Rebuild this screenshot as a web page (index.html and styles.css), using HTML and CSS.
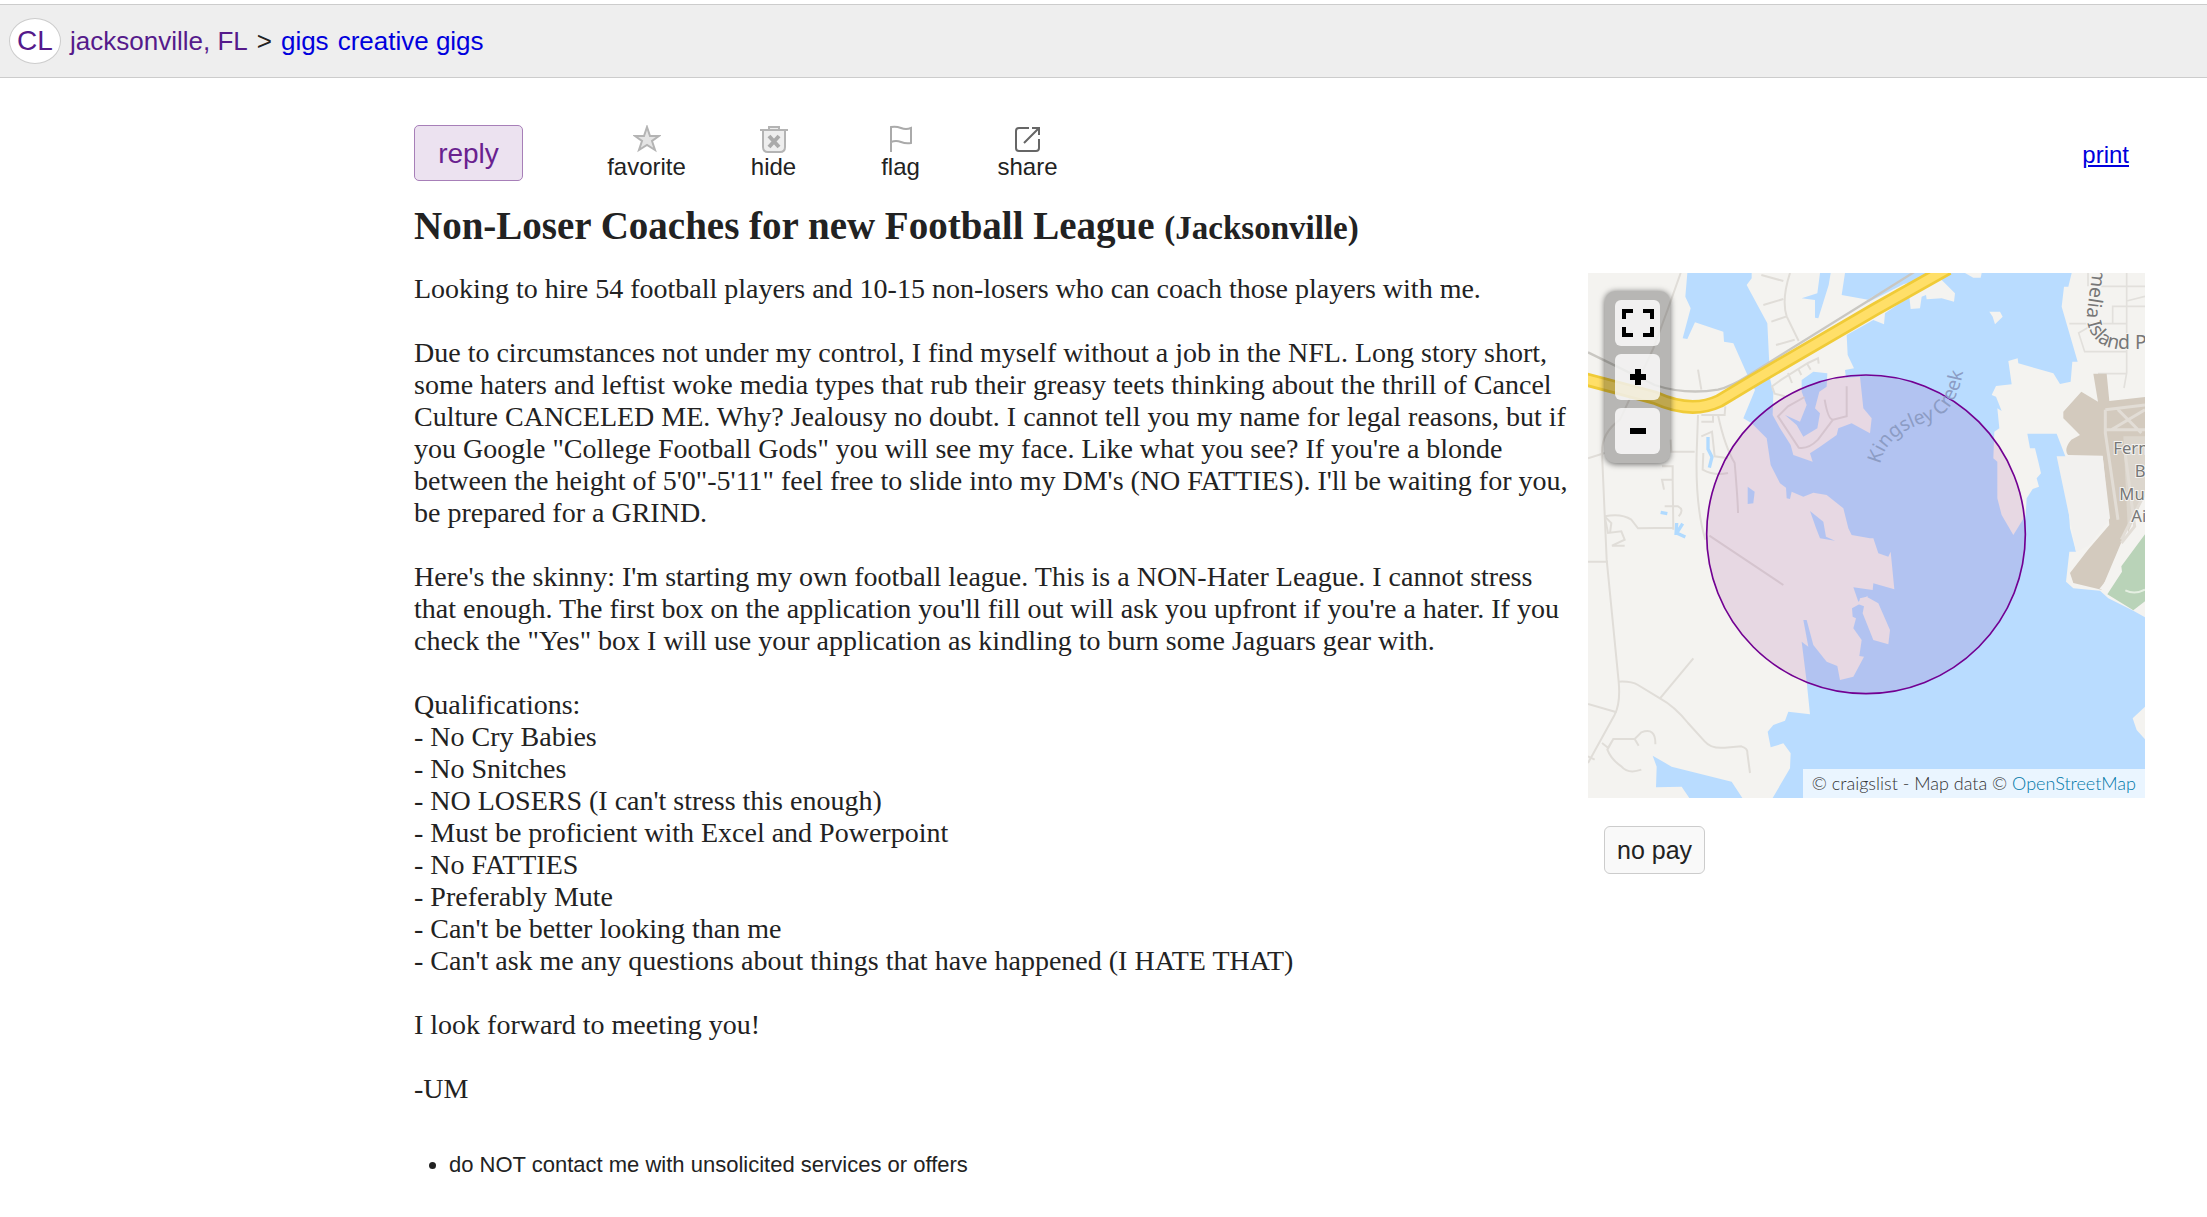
FILE: index.html
```html
<!DOCTYPE html>
<html lang="en">

<head>
    <meta charset="utf-8">
    <title>Non-Loser Coaches for new Football League</title>
    <link rel="stylesheet" href="styles.css">
</head>

<body>
    <header class="header">
        <a class="logo" href="#">CL</a>
        <nav class="crumbs">
            <a class="visited" href="#">jacksonville, FL</a>
            <span>&gt;</span>
            <a href="#">gigs</a>
            <a href="#">creative gigs</a>
        </nav>
    </header>

    <main class="content">
        <div class="toolbar">
            <button class="reply" type="button">reply</button>
            <div class="actions">
                <button class="action" type="button">
                    <svg width="28" height="28" viewBox="0 0 28 28">
                        <path d="M14 2l3 9h9l-7 5 3 9-8-5-8 5 3-9-7-5h9z" fill="#e4e4e4" stroke="#b4b4b4" stroke-width="2"/>
                    </svg>
                    favorite
                </button>
                <button class="action" type="button">
                    <svg width="28" height="28" viewBox="0 0 28 28" fill="none" stroke="#b4b4b4" stroke-width="2">
                        <path d="M0 5h28M9 5V2h10v3M3 5v17q0 5 5 5h12q5 0 5-5V5" fill="#eee"/>
                        <path d="M9 11l10 11M19 11L9 22" stroke="#aaa" stroke-width="4"/>
                    </svg>
                    hide
                </button>
                <button class="action" type="button">
                    <svg width="28" height="28" viewBox="0 0 28 28" fill="none" stroke="#aaa" stroke-width="2">
                        <path d="M4 27V2q5-1 10 1t10 0v15q-5 1-10-1t-10 0"/>
                    </svg>
                    flag
                </button>
                <button class="action" type="button">
                    <svg width="28" height="28" viewBox="0 0 28 28" fill="none" stroke="#666" stroke-width="2">
                        <path d="M15 3H5q-3 0-3 3v17q0 3 3 3h17q3 0 3-3v-9M18 3h7v7M25 3L10 18"/>
                    </svg>
                    share
                </button>
            </div>
            <a class="print" href="#">print</a>
        </div>

        <h1>Non-Loser Coaches for new Football League <small>(Jacksonville)</small></h1>

        <div class="posting">
            <section class="body">
                <p>Looking to hire 54 football players and 10-15 non-losers who can coach those players with me.</p>
                <p>Due to circumstances not under my control, I find myself without a job in the NFL. Long story short, some haters and leftist woke media types that rub their greasy teets thinking about the thrill of Cancel Culture CANCELED ME. Why? Jealousy no doubt. I cannot tell you my name for legal reasons, but if you Google "College Football Gods" you will see my face. Like what you see? If you're a blonde between the height of 5'0"-5'11" feel free to slide into my DM's (NO FATTIES). I'll be waiting for you, be prepared for a GRIND.</p>
                <p>Here's the skinny: I'm starting my own football league. This is a NON-Hater League. I cannot stress that enough. The first box on the application you'll fill out will ask you upfront if you're a hater. If you check the "Yes" box I will use your application as kindling to burn some Jaguars gear with.</p>
                <p>
                    Qualifications:<br>
                    - No Cry Babies<br>
                    - No Snitches<br>
                    - NO LOSERS (I can't stress this enough)<br>
                    - Must be proficient with Excel and Powerpoint<br>
                    - No FATTIES<br>
                    - Preferably Mute<br>
                    - Can't be better looking than me<br>
                    - Can't ask me any questions about things that have happened (I HATE THAT)
                </p>
                <p>I look forward to meeting you!</p>
                <p>-UM</p>
                <ul class="notices">
                    <li>do NOT contact me with unsolicited services or offers</li>
                </ul>
            </section>

            <aside class="side">
                <div class="map">
                    <svg class="tiles" viewBox="0 0 1671 1575">
                        <rect width="1671" height="1575" fill="#f4f3f0"/>

                        <!-- water -->
                        <g fill="#b9dcff">
                            <path d="M298 0L292 71 308 106 284 196 298 198 321 148 406 176 408 206 436 211 476 301 501 351 466 436 491 451 536 496 548 576 576 631 594 644 596 676 606 678 611 656 646 671 676 659 716 666 766 706 781 766 791 786 846 796 856 796 871 841 901 851 908 836 919 949 856 931 854 951 796 943 811 986 840 968 830 985 792 1006 794 1031 804 1036 796 1066 821 1101 814 1149 828 1151 796 1211 756 1221 748 1179 716 1166 676 1116 656 1041 646 1041 661 1121 641 1106 656 1226 666 1324 601 1316 591 1343 556 1356 539 1376 548 1423 586 1411 608 1441 606 1486 554 1575H1671V1033L1636 1013 1561 976 1536 953 1456 946 1434 926 1444 836 1464 836 1446 766 1434 596 1449 594 1406 482H1318L1326 526 1341 526 1351 566 1359 601 1346 616 1353 641 1334 648 1316 676 1313 726 1276 786 1241 726 1228 676V566L1216 556 1219 476 1234 466 1228 406 1241 414 1224 371 1211 366 1224 339 1271 334 1261 264 1289 256 1291 271 1396 301 1416 333 1448 326 1453 266 1469 266 1421 101 1428 41 1441 41 1451 0z"/>
                            <path d="M194 1448L251 1481 431 1526 463 1575H304L281 1541 204 1543 206 1481z"/>
                        </g>

                        <!-- land inside the water -->
                        <g fill="#f4f3f0">
                            <path d="M491 0H771L761 66 840 80 900 40 1056 16 1101 61 1098 86 1061 76 1016 79 1014 66 1001 71 996 106 968 108 964 71 891 121 888 154 856 141 776 186 779 246 798 286 771 291 774 314 816 311 826 406 851 436 846 481 791 451 751 466 746 486 696 521 666 541 674 566 616 546 608 516 576 466 554 426 556 361 546 316 538 151 476 36 491 16z"/>
                            <path d="M1131 0L1156 14H1178L1181 0z"/>
                            <path d="M1204 116H1236L1244 131 1221 154 1214 131z"/>
                            <path d="M816 976L836 971 871 991 906 1071 901 1114 856 1101 824 1021 828 1000 812 994z"/>
                            <path d="M1671 1301L1634 1336 1646 1371 1671 1399z"/>
                        </g>
                        <path d="M840 88L1040 -14H930z" fill="#b9dcff"/>

                        <!-- ponds and creeks -->
                        <g fill="#b9dcff">
                            <path d="M696 0L688 61 641 76 681 81V134L691 136 722 36 728 0z"/>
                            <path d="M641 321L676 296 718 301 716 341 694 356 681 406 696 421 688 466 646 491 626 456 591 426 636 446 656 396 641 356z"/>
                            <path d="M479 641L500 656 496 691 479 693z"/>
                            <path d="M666 714L706 746 714 791 741 803 696 796 684 765z"/>
                        </g>
                        <g fill="none" stroke="#b0daff" stroke-width="10">
                            <path d="M360 492V528L372 552 364 584M218 718L238 722M266 750L264 786M284 752L266 780 292 792"/>
                        </g>

                        <!-- minor roads -->
                        <g fill="none" stroke="#e0ddd8" stroke-width="6">
                            <path d="M278 0Q240 110 196 226L96 440Q40 480 42 540L56 860 92 1226Q98 1290 80 1325L0 1470"/>
                            <path d="M0 556L50 540M320 536H250L248 500M330 426L326 540Q322 700 352 800M330 290L340 350M340 426H410L412 400"/>
                            <path d="M390 426Q410 520 440 570 450 690 450 720M375 426V446H340M340 490L372 476 380 550 420 556M346 540L344 590Q380 610 420 600"/>
                            <path d="M222 580H254V620H222L228 650M254 620L256 770 M230 700H270Q290 710 272 730M50 730Q100 720 130 740L150 766 256 764M52 740L60 780 100 775 110 800 72 818H110M0 866H60M50 730L70 750 66 780"/>
                            <path d="M364 788L586 936M92 1226Q130 1224 150 1236L216 1276 316 1156M216 1276Q260 1300 300 1350L350 1405Q370 1428 410 1424L460 1420Q480 1426 478 1440L486 1500"/>
                            <path d="M0 1293L86 1318M42 1410L60 1424 76 1398H140L160 1378Q204 1362 202 1414M76 1398L58 1430Q70 1460 100 1480 120 1504 160 1490M140 1398L152 1418M0 1450L20 1460"/>
                            <path d="M606 0Q580 80 596 130L632 204M520 6L586 24M526 96L586 78M550 146L596 130M564 216L620 200"/>
                            <path d="M590 370L560 362 552 340 580 320 660 270 690 256 692 272M600 300L612 330M630 286L640 306M656 270L668 290M710 380Q720 440 735 440L776 430V340M735 440L690 500Q660 530 632 524L570 430 600 400 650 372"/>
                        </g>
                        <g fill="none" stroke="#e2e0dc" stroke-width="5">
                            <path d="M1500 0V40M1616 0V300L1608 345M1540 40H1671M1444 152H1616M1574 152V100H1671M1520 152L1472 180 1490 236H1616M1616 84L1671 70M1530 302H1616"/>
                        </g>

                        <!-- airport and park -->
                        <path d="M1516 302H1556L1564 384 1671 372V640L1540 950 1456 930 1446 900 1500 830 1564 756 1544 548 1440 546Q1426 528 1450 500L1476 486 1426 436V416L1480 356 1530 386z" fill="#d3cabe"/>
                        <path d="M1406 550H1544L1566 736 1500 820 1464 836 1450 760z" fill="#f2f1ef"/>
                        <path d="M1606 490H1671V660L1620 780z" fill="#dcd6cd"/>
                        <g fill="none" stroke="#e2ddd6" stroke-width="9">
                            <path d="M1552 410L1671 396M1552 410V480L1590 740M1552 470H1671M1570 470L1671 410M1590 410L1660 480M1610 530L1640 760 1600 810M1671 660L1600 800"/>
                        </g>
                        <path d="M1671 770L1560 950 1534 948 1602 862z" fill="#f4f3f0"/>
                        <path d="M1671 784L1600 880 1602 896 1558 964 1636 1012 1671 985z" fill="#b9d3b8"/>
                        <path d="M1612 952Q1640 966 1671 950" fill="none" stroke="#e5efe2" stroke-width="6"/>

                        <!-- railway and highway -->
                        <path d="M0 238L200 336Q290 366 390 350 430 340 480 308L846 80 990 -10" fill="none" stroke="#c9c7c2" stroke-width="7"/>
                        <path d="M-10 318L200 374Q310 424 394 384L500 320 860 110 1080 -14" fill="none" stroke="#f0cb37" stroke-width="42"/>
                        <path d="M-10 318L200 374Q310 424 394 384L500 320 860 110 1080 -14" fill="none" stroke="#ffdf68" stroke-width="26"/>

                        <circle cx="834" cy="784" r="478" fill="#800080" fill-opacity=".11" stroke="#720092" stroke-width="5"/>

                        <path id="creek" d="M876 574C896 490 960 466 1020 446S1118 380 1132 250" fill="none"/>
                        <path id="island" d="M1514 -14C1510 40 1498 90 1497 130S1520 222 1590 228H1760" fill="none"/>
                        <g class="place">
                            <text class="creek"><textPath href="#creek">Kingsley Creek</textPath></text>
                            <text class="road"><textPath href="#island">melia Island P</textPath></text>
                            <text x="1576" y="544">Fern</text>
                            <text x="1640" y="612">B</text>
                            <text x="1594" y="680">Mu</text>
                            <text x="1630" y="748">Ai</text>
                        </g>
                    </svg>
                    <div class="controls">
                        <button type="button" aria-label="Full screen">
                            <svg width="32" height="28" viewBox="0 0 32 28"><path d="M2 10V2h9M21 2h9v8M30 18v8h-9M11 26H2v-8"/></svg>
                        </button>
                        <button type="button" aria-label="Zoom in">
                            <svg width="32" height="28" viewBox="0 0 32 28"><path d="M8 14h16M16 6v16"/></svg>
                        </button>
                        <button type="button" aria-label="Zoom out">
                            <svg width="32" height="28" viewBox="0 0 32 28"><path d="M8 14h16"/></svg>
                        </button>
                    </div>
                    <div class="credit">© craigslist - Map data © <a href="#">OpenStreetMap</a></div>
                </div>
                <span class="tag">no pay</span>
            </aside>
        </div>
    </main>
</body>

</html>
```
FILE: styles.css
```css
* {
    box-sizing: border-box;
}

body {
    margin: 0;
    padding-top: 4px;
    font-family: "Liberation Sans", Arial, sans-serif;
    font-size: 24px;
    color: #222222;
    background: #ffffff;
}

a {
    color: #0000dd;
}

button {
    font-family: inherit;
    color: inherit;
    cursor: pointer;
}

.header {
    display: flex;
    align-items: center;
    gap: 9px;
    height: 74px;
    padding: 0 9px;
    background: #eeeeee;
    border: solid #cccccc;
    border-width: 1px 0;
}

.header a {
    text-decoration: none;
}

.logo {
    width: 52px;
    height: 46px;
    border: 1px solid #cccccc;
    border-radius: 50%;
    background: #ffffff;
    font-size: 28px;
    line-height: 44px;
    text-align: center;
}

.header .logo,
.header .visited {
    color: #551a8b;
}

.crumbs {
    display: flex;
    gap: 9px;
    font-size: 26px;
}

.content {
    padding: 46px 62px 0 414px;
}

.toolbar {
    display: flex;
    align-items: center;
    height: 58px;
}

.reply {
    width: 109px;
    height: 56px;
    padding: 2px 0 0;
    border: 1px solid #a77fb8;
    border-radius: 5px;
    background: #ece2f0;
    color: #69218f;
    font-size: 28px;
}

.actions {
    display: flex;
    margin-left: 60px;
}

.action {
    display: flex;
    flex-direction: column;
    align-items: center;
    width: 127px;
    padding: 0;
    border: 0;
    background: none;
    font-size: 24px;
    line-height: 28px;
}

.print {
    margin-left: auto;
    margin-right: 16px;
    padding-top: 3px;
}

h1 {
    margin: 21px 0 22px;
    font-family: "Liberation Serif", "Times New Roman", serif;
    font-size: 39px;
    line-height: 46px;
}

h1 small {
    font-size: 33px;
}

.posting {
    display: flex;
    align-items: flex-start;
    gap: 16px;
}

.body {
    flex: 1;
    font-family: "Liberation Serif", "Times New Roman", serif;
    font-size: 28px;
    line-height: 32px;
}

.body p {
    margin: 0 0 32px;
}

.notices {
    margin: 44px 0 0;
    padding-left: 35px;
    font-family: "Liberation Sans", Arial, sans-serif;
    font-size: 22px;
}

.side {
    flex: 0 0 557px;
}

.map {
    position: relative;
    overflow: hidden;
}

.tiles {
    display: block;
    width: 100%;
}

.place {
    font-family: "Noto Sans", sans-serif;
    font-size: 50px;
    fill: #777777;
    stroke: #f4f3f0;
    stroke-width: 6px;
    paint-order: stroke;
}

.place .creek,
.place .road {
    font-size: 58px;
}

.place .creek {
    fill: #8c9cc4;
    stroke: none;
}

.controls {
    position: absolute;
    top: 18px;
    left: 17px;
    display: flex;
    flex-direction: column;
    gap: 8px;
    padding: 9px 10px;
    border-radius: 10px;
    background: rgba(0, 0, 0, 0.25);
    box-shadow: 0 1px 6px rgba(0, 0, 0, 0.6);
}

.controls button {
    display: flex;
    align-items: center;
    justify-content: center;
    width: 45px;
    height: 46px;
    padding: 0;
    border: 0;
    border-radius: 6px;
    background: rgba(255, 255, 255, 0.8);
}

.controls path {
    fill: none;
    stroke: #000000;
    stroke-width: 4px;
}

.controls button + button path {
    stroke-width: 6px;
}

.credit {
    position: absolute;
    right: 0;
    bottom: 0;
    padding: 0 9px;
    background: rgba(255, 255, 255, 0.7);
    color: #333333;
    font-family: Lato, sans-serif;
    font-size: 18px;
    font-weight: 300;
    line-height: 29px;
}

.credit a {
    color: #0078a8;
    text-decoration: none;
}

.tag {
    display: inline-block;
    margin: 28px 16px;
    padding: 0 12px;
    border: 1px solid #cccccc;
    border-radius: 6px;
    background: #f9f9f9;
    font-size: 25px;
    line-height: 46px;
}
```
